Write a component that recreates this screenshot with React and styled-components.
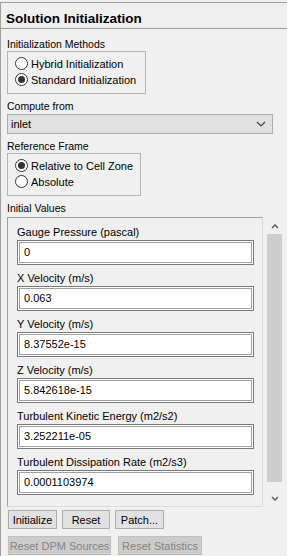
import React from 'react';
import styled, { createGlobalStyle } from 'styled-components';

const Global = createGlobalStyle`
  html, body {
    margin: 0;
    padding: 0;
    background: #f0f0f0;
  }
  body {
    font-family: 'Liberation Sans', Arial, sans-serif;
    font-size: 10.5px;
    color: #000;
  }
`;

const fields = [
  { label: 'Gauge Pressure (pascal)', value: '0' },
  { label: 'X Velocity (m/s)', value: '0.063' },
  { label: 'Y Velocity (m/s)', value: '8.37552e-15' },
  { label: 'Z Velocity (m/s)', value: '5.842618e-15' },
  { label: 'Turbulent Kinetic Energy (m2/s2)', value: '3.252211e-05' },
  { label: 'Turbulent Dissipation Rate (m2/s3)', value: '0.0001103974' },
];

const Radio = ({ checked, label }) => (
  <RadioRow>
    <RadioDot checked={checked} />
    <span>{label}</span>
  </RadioRow>
);

const App = () => {
  return (
    <>
      <Global />
      <Panel>
        <Title>Solution Initialization</Title>
        <Body>
          <Label>Initialization Methods</Label>
          <Group width={139} height={43}>
            <Radio label='Hybrid  Initialization' />
            <Radio checked label='Standard Initialization' />
          </Group>

          <Label top={6}>Compute from</Label>
          <Select>
            <span>inlet</span>
            <svg width='10' height='6' viewBox='0 0 10 6'>
              <path d='M1 1 L5 5 L9 1' fill='none' stroke='#444' strokeWidth='1.2' />
            </svg>
          </Select>

          <Label top={6}>Reference Frame</Label>
          <Group width={134} height={43}>
            <Radio checked label='Relative to Cell Zone' />
            <Radio label='Absolute' />
          </Group>

          <Label top={6}>Initial Values</Label>
          <ScrollArea>
            <ValuesBox>
              {fields.map((f) => (
                <Field key={f.label}>
                  <FieldLabel>{f.label}</FieldLabel>
                  <Input>{f.value}</Input>
                </Field>
              ))}
            </ValuesBox>
            <Scrollbar>
              <Arrow>
                <svg width='8' height='5' viewBox='0 0 8 5'>
                  <path d='M1 4 L4 1 L7 4' fill='none' stroke='#555' strokeWidth='1.3' />
                </svg>
              </Arrow>
              <Thumb />
              <Arrow>
                <svg width='8' height='5' viewBox='0 0 8 5'>
                  <path d='M1 1 L4 4 L7 1' fill='none' stroke='#555' strokeWidth='1.3' />
                </svg>
              </Arrow>
            </Scrollbar>
          </ScrollArea>

          <Buttons>
            <Button width={49}>Initialize</Button>
            <Button width={48}>Reset</Button>
            <Button width={49}>Patch...</Button>
          </Buttons>
          <Buttons gap={7}>
            <Button disabled width={103}>Reset DPM Sources</Button>
            <Button disabled width={84}>Reset Statistics</Button>
          </Buttons>
        </Body>
      </Panel>
    </>
  );
};

const Panel = styled.div`
  margin-top: 2px;
  height: 554px;
  border-top: 1px solid #a0a0a0;
  border-left: 1px solid #a0a0a0;
  box-sizing: border-box;
`;

const Title = styled.div`
  height: 26px;
  box-sizing: border-box;
  padding: 8px 0 0 5px;
  font-weight: bold;
  font-size: 13.5px;
  line-height: 15px;
  border-bottom: 1px solid #a0a0a0;
`;

const Body = styled.div`
  padding: 0 0 0 6px;
  display: flex;
  flex-direction: column;
`;

const Label = styled.div`
  margin-top: ${(p) => p.top ?? 9}px;
  height: 13px;
  line-height: 13px;
`;

const Group = styled.div`
  width: ${(p) => p.width}px;
  height: ${(p) => p.height}px;
  box-sizing: border-box;
  border: 1px solid #b4b4b4;
  padding: 5px 0 0 7px;
  display: flex;
  flex-direction: column;
  gap: 3px;
`;

const RadioRow = styled.div`
  display: flex;
  align-items: center;
  gap: 3px;
  height: 13px;
  font-size: 11px;
`;

const RadioDot = styled.span`
  width: 11px;
  height: 11px;
  border-radius: 50%;
  border: 1px solid #333;
  background: #fff;
  position: relative;
  flex: none;
  &::after {
    content: '';
    display: ${(p) => (p.checked ? 'block' : 'none')};
    position: absolute;
    left: 2px;
    top: 2px;
    width: 7px;
    height: 7px;
    border-radius: 50%;
    background: #333;
  }
`;

const Select = styled.div`
  margin-top: 1px;
  width: 266px;
  height: 20px;
  box-sizing: border-box;
  background: #e1e1e1;
  border: 1px solid #adadad;
  display: flex;
  align-items: center;
  justify-content: space-between;
  padding: 0 6px 0 3px;
  font-size: 11px;
`;

const ScrollArea = styled.div`
  margin-top: 2px;
  display: flex;
  gap: 3px;
  height: 290px;
`;

const ValuesBox = styled.div`
  width: 256px;
  box-sizing: border-box;
  border: 1px solid #a0a0a0;
  border-right-color: #dcdcdc;
  border-bottom-color: #dcdcdc;
  padding: 8px 0 0 9px;
  display: flex;
  flex-direction: column;
  gap: 7px;
`;

const Field = styled.div`
  display: flex;
  flex-direction: column;
  gap: 1px;
`;

const FieldLabel = styled.div`
  height: 13px;
  line-height: 13px;
  font-size: 11px;
`;

const Input = styled.div`
  width: 237px;
  height: 25px;
  box-sizing: border-box;
  border: 1px solid #7a7a7a;
  box-shadow: inset 0 0 0 1px #fff, inset 0 0 0 2px #a0a0a0;
  background: #fff;
  padding: 0 6px;
  line-height: 23px;
  font-size: 11px;
`;

const Scrollbar = styled.div`
  margin-top: 3px;
  width: 17px;
  height: 285px;
  display: flex;
  flex-direction: column;
  background: #f0f0f0;
`;

const Arrow = styled.div`
  height: 13px;
  display: flex;
  align-items: center;
  justify-content: center;
`;

const Thumb = styled.div`
  flex: 1;
  margin: 1px 1px 10px;
  background: #cdcdcd;
`;

const Buttons = styled.div`
  display: flex;
  gap: ${(p) => p.gap ?? 5}px;
  margin-top: ${(p) => (p.gap ? 7 : 3)}px;
  padding-left: 1px;
`;

const Button = styled.div`
  width: ${(p) => p.width}px;
  height: 19px;
  box-sizing: border-box;
  border: 1px solid ${(p) => (p.disabled ? '#bfbfbf' : '#adadad')};
  background: ${(p) => (p.disabled ? '#cccccc' : '#e1e1e1')};
  color: ${(p) => (p.disabled ? '#838383' : '#000')};
  font-size: 11px;
  display: flex;
  align-items: center;
  justify-content: center;
`;

export default App;
